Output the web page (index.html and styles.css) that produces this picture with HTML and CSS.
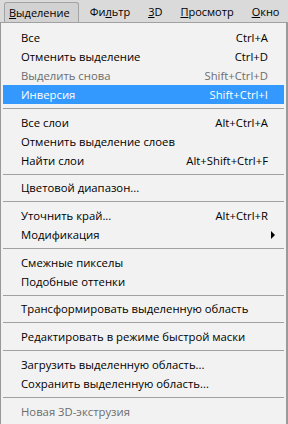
FILE: index.html
```html
<!DOCTYPE html>
<html lang="ru">
<head>
    <meta charset="UTF-8">
    <title>Выделение</title>
    <link rel="stylesheet" href="styles.css">
</head>
<body>
    <div class="menubar">
        <span class="menubar-item open"><u>В</u>ыделение</span>
        <span class="menubar-item">Фи<u>л</u>ьтр</span>
        <span class="menubar-item"><u>3</u>D</span>
        <span class="menubar-item"><u>П</u>росмотр</span>
        <span class="menubar-item"><u>О</u>кно</span>
    </div>

    <div class="menu">
        <div class="item"><span>Все</span><span class="key">Ctrl+A</span></div>
        <div class="item"><span>Отменить выделение</span><span class="key">Ctrl+D</span></div>
        <div class="item disabled"><span>Выделить снова</span><span class="key">Shift+Ctrl+D</span></div>
        <div class="item active"><span>Инверсия</span><span class="key">Shift+Ctrl+I</span></div>
        <div class="sep"></div>
        <div class="item"><span>Все слои</span><span class="key">Alt+Ctrl+A</span></div>
        <div class="item"><span>Отменить выделение слоев</span></div>
        <div class="item"><span>Найти слои</span><span class="key">Alt+Shift+Ctrl+F</span></div>
        <div class="sep"></div>
        <div class="item"><span>Цветовой диапазон...</span></div>
        <div class="sep"></div>
        <div class="item"><span>Уточнить край...</span><span class="key">Alt+Ctrl+R</span></div>
        <div class="item submenu"><span>Модификация</span><span class="arrow"></span></div>
        <div class="sep"></div>
        <div class="item"><span>Смежные пикселы</span></div>
        <div class="item"><span>Подобные оттенки</span></div>
        <div class="sep"></div>
        <div class="item"><span>Трансформировать выделенную область</span></div>
        <div class="sep"></div>
        <div class="item"><span>Редактировать в режиме быстрой маски</span></div>
        <div class="sep"></div>
        <div class="item"><span>Загрузить выделенную область...</span></div>
        <div class="item"><span>Сохранить выделенную область...</span></div>
        <div class="sep"></div>
        <div class="item disabled"><span>Новая 3D-экструзия</span></div>
    </div>
</body>
</html>
```

FILE: styles.css
```css
body {
    margin: 0;
    padding: 0;
    width: 288px;
    height: 424px;
    overflow: hidden;
    background-color: #f2f2f2;
    font-family: "Open Sans", "Liberation Sans", Arial, sans-serif;
    font-size: 11px;
    color: #000;
}

.menubar {
    display: flex;
    align-items: flex-end;
    height: 22px;
    padding-left: 4px;
    background-color: #dadada;
}

.menubar-item {
    height: 20px;
    line-height: 20px;
    padding: 0 9px 0 9px;
    box-sizing: border-box;
}

.menubar-item.open {
    padding: 0 8px 0 4px;
    margin-right: 2px;
    background-color: #d2d2d2;
    border: 1px solid #a3a3a3;
    border-bottom: none;
    border-radius: 3px 3px 0 0;
    line-height: 19px;
}

.menu {
    height: 402px;
    box-sizing: border-box;
    padding: 5px 2px 0 2px;
    border-top: 1px solid #a0a0a0;
    border-left: 1px solid #979797;
    border-right: 2px solid #9a9a9a;
    font-size: 11.3px;
}

.item {
    display: flex;
    justify-content: space-between;
    align-items: center;
    height: 19px;
    padding: 0 16px 0 18px;
}

.item.disabled {
    color: #6d6d6d;
}

.item.active {
    background-color: #3399ff;
    color: #fff;
}

.key {
    white-space: nowrap;
}

.arrow {
    width: 0;
    height: 0;
    margin-right: -7px;
    border-top: 4px solid transparent;
    border-bottom: 4px solid transparent;
    border-left: 4px solid #000;
}

.sep {
    height: 8.7px;
    display: flex;
    align-items: center;
}

.sep::after {
    content: "";
    flex: 1;
    height: 1px;
    background-color: #a0a0a0;
}
```
